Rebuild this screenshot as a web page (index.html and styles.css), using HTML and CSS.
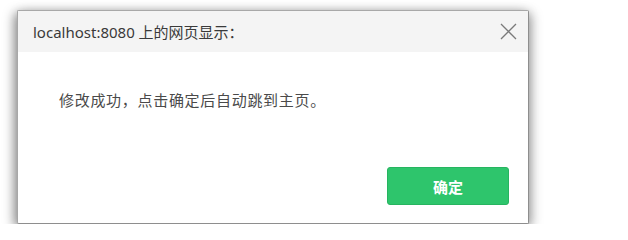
FILE: index.html
```html
<!DOCTYPE html>
<html lang="zh-CN">
<head>
<meta charset="utf-8">
<title>localhost:8080 上的网页显示</title>
<link rel="stylesheet" href="styles.css">
</head>
<body>
<div class="stage">
  <div class="dialog" role="alertdialog">
    <div class="dialog-header">
      <span class="dialog-title">localhost:8080 上的网页显示：</span>
      <button class="close" aria-label="关闭">
        <svg width="17" height="17" viewBox="0 0 17 17"><path d="M1 1 L16 16 M16 1 L1 16" stroke="#7a7a7a" stroke-width="1.3" fill="none"/></svg>
      </button>
    </div>
    <div class="dialog-body">修改成功，点击确定后自动跳到主页。</div>
    <div class="dialog-footer">
      <button class="ok">确定</button>
    </div>
  </div>
</div>
</body>
</html>
```
FILE: styles.css
```css
html, body {
  margin: 0;
  padding: 0;
  background: #ffffff;
}
.stage {
  padding: 10px 0 0 17px;
  font-family: "Noto Sans", "Noto Sans CJK SC", sans-serif;
}
.dialog {
  width: 512px;
  height: 214px;
  box-sizing: border-box;
  border: 1px solid #a8a8a8;
  border-right-color: #8e8e8e;
  border-bottom-color: #8e8e8e;
  border-radius: 2px;
  background: #ffffff;
  box-shadow: -3px 3px 12px rgba(0,0,0,0.4), 3px 3px 12px rgba(0,0,0,0.28);
  display: flex;
  flex-direction: column;
}
.dialog-header {
  height: 41px;
  background: #f4f4f4;
  display: flex;
  align-items: center;
  justify-content: space-between;
  padding: 0 10px 0 15px;
}
.dialog-title {
  font-size: 15px;
  color: #3a3a3a;
}
.close {
  border: 0;
  background: transparent;
  padding: 0;
  width: 20px;
  height: 20px;
  display: flex;
  align-items: center;
  justify-content: center;
}
.dialog-body {
  padding: 38px 0 0 41px;
  font-size: 15px;
  line-height: 20px;
  color: #4a4a4a;
  letter-spacing: 0.7px;
}
.dialog-footer {
  margin-top: auto;
  display: flex;
  justify-content: flex-end;
  padding: 0 19px 18px 0;
}
.ok {
  width: 122px;
  height: 38px;
  border: 1px solid #27b460;
  border-radius: 3px;
  background: #2ec56c;
  color: #ffffff;
  font-family: "Noto Sans CJK SC", sans-serif;
  font-size: 15px;
  font-weight: 700;
  padding: 0;
}
```
